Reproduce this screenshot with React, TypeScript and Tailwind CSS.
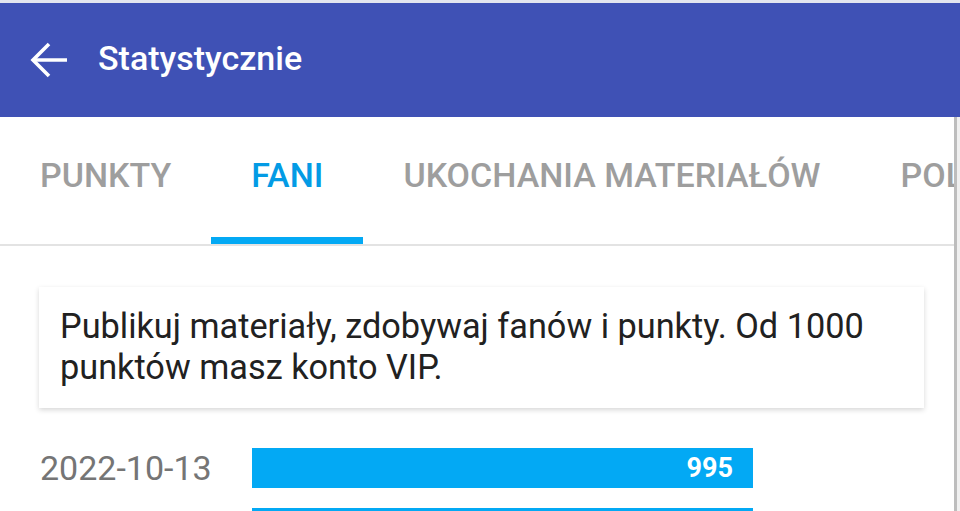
import React from "react";

const TABS = ["PUNKTY", "FANI", "UKOCHANIA MATERIAŁÓW", "POLUBIENIA"];

function BackArrow() {
  return (
    <svg width="38" height="36" viewBox="0 0 38 36" fill="none" aria-hidden>
      <path d="M3 18H37" stroke="white" strokeWidth="3.6" />
      <path d="M19 2L3 18L19 34" stroke="white" strokeWidth="3.6" />
    </svg>
  );
}

export default function App() {
  return (
    <div
      className="w-[960px] h-[511px] overflow-hidden flex flex-col bg-white"
      style={{ fontFamily: "Roboto, 'Noto Sans', sans-serif" }}
    >
      {/* status bar remnant */}
      <div className="h-[3px] bg-[#e3e5ef] shrink-0" />

      {/* app bar */}
      <div className="h-[114px] shrink-0 bg-[#3f51b5] flex items-center pl-[30px] gap-[30px]">
        <BackArrow />
        <h1 className="text-white text-[34px] font-medium leading-none -mt-[4px]">Statystycznie</h1>
      </div>

      <div className="flex flex-1 min-h-0">
        <div className="flex-1 min-w-0 flex flex-col">
          {/* tabs */}
          <div className="h-[127px] bg-white flex overflow-hidden shrink-0">
            {TABS.map((t) => (
              <div
                key={t}
                className={`shrink-0 px-[40px] h-full flex items-center pb-[4px] border-b-[7px] text-[34px] font-medium whitespace-nowrap ${
                  t === "FANI"
                    ? "border-[#03a9f4] text-[#039be5]"
                    : "border-transparent text-[#9e9e9e]"
                }`}
              >
                {t}
              </div>
            ))}
          </div>
          <div className="h-[2px] bg-[#e3e3e3] shrink-0" />

          {/* content */}
          <div className="pt-[41px] pl-[39px] pr-[30px]">
            <div className="bg-white shadow-[0_2px_5px_rgba(0,0,0,0.16)] pl-[21px] pr-[16px] pt-[19px] pb-[20px] text-[34.3px] leading-[41px] text-[#212121]">
              Publikuj materiały, zdobywaj fanów i punkty. Od 1000 punktów masz konto VIP.
            </div>

            <div className="mt-[40px] flex flex-col gap-[20px]">
              <div className="flex items-center">
                <div className="w-[213px] pl-[1px] text-[34px] text-[#757575] leading-none">2022-10-13</div>
                <div className="w-[501px] h-[40px] bg-[#03a9f4] flex items-center justify-end pr-[20px] text-white font-bold text-[27px]">
                  995
                </div>
              </div>
              <div className="flex items-center">
                <div className="w-[213px]" />
                <div className="w-[501px] h-[40px] bg-[#03a9f4]" />
              </div>
            </div>
          </div>
        </div>
        {/* scroll edge */}
        <div className="w-[3px] bg-[#bdbdbd] shrink-0" />
        <div className="w-[3px] bg-[#f0f0f0] shrink-0" />
      </div>
    </div>
  );
}
